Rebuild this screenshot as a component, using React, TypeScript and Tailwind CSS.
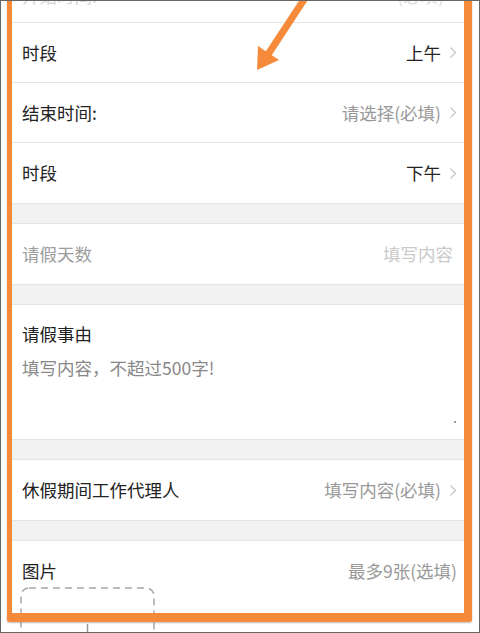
import React from 'react'

const font = { fontFamily: '"Noto Sans CJK SC", "Noto Sans", sans-serif' }

function Chevron() {
  return (
    <svg width="8" height="13" viewBox="0 0 8 13" className="shrink-0">
      <path d="M1.5 1.5 L6.5 6.5 L1.5 11.5" fill="none" stroke="#c9c9c9" strokeWidth="1.4" />
    </svg>
  )
}

function PickRow({ label, value, muted, last }: { label: string; value: string; muted?: boolean; last?: boolean }) {
  return (
    <div className={`h-[60px] flex items-center justify-between pl-3 pr-[7px] ${last ? '' : 'border-b border-[#e4e4e4]'}`}>
      <span className="text-[17.5px] text-[#222]">{label}</span>
      <span className="flex items-center gap-2">
        <span className={`text-[17.5px] ${muted ? 'text-[#999]' : 'text-[#222]'}`}>{value}</span>
        <Chevron />
      </span>
    </div>
  )
}

function Band() {
  return <div className="h-[19px] bg-[#f1f1f1]" />
}

export default function App() {
  return (
    <div className="relative w-[480px] h-[633px] overflow-hidden bg-white border border-[#666]" style={font}>
      <div className="ml-[9px] w-[454px] leading-[24px]">
        {/* Group 1 — time rows */}
        <div className="bg-white border-b border-[#e4e4e4]">
          <div className="h-[22px] overflow-hidden flex justify-between pl-3 pr-[20px] border-b border-[#e4e4e4]">
            <span className="-mt-[17px] text-[17.5px] text-[#d6d6d6]">开始时间:</span>
            <span className="-mt-[17px] text-[17.5px] text-[#dddddd]">(必填)</span>
          </div>
          <PickRow label="时段" value="上午" />
          <PickRow label="结束时间:" value="请选择(必填)" muted />
          <PickRow label="时段" value="下午" last />
        </div>

        <Band />

        {/* Days */}
        <div className="h-[62px] bg-white border-y border-[#e4e4e4] flex items-center justify-between pl-3 pr-[11px]">
          <span className="text-[17.5px] text-[#9d9d9d]">请假天数</span>
          <span className="text-[17.5px] text-[#cacaca]">填写内容</span>
        </div>

        <Band />

        {/* Reason */}
        <div className="relative h-[136px] bg-white border-y border-[#e4e4e4] pl-3 pt-[17px]">
          <div className="text-[17.5px] text-[#222]">请假事由</div>
          <div className="mt-[10px] text-[17.5px] text-[#888]">填写内容，不超过500字!</div>
          <span className="absolute right-[8px] bottom-[16px] w-[2px] h-[2px] rounded-full bg-[#777]" />
        </div>

        <Band />

        {/* Deputy */}
        <div className="h-[62px] bg-white border-y border-[#e4e4e4] flex items-center justify-between pl-3 pr-[7px]">
          <span className="text-[17.5px] text-[#222]">休假期间工作代理人</span>
          <span className="flex items-center gap-2">
            <span className="text-[17.5px] text-[#999]">填写内容(必填)</span>
            <Chevron />
          </span>
        </div>

        <Band />

        {/* Pictures */}
        <div className="bg-white border-t border-[#e4e4e4] pl-3 pr-[7px] pt-[18px]">
          <div className="flex justify-between">
            <span className="text-[17.5px] text-[#222]">图片</span>
            <span className="text-[17.5px] text-[#999]">最多9张(选填)</span>
          </div>
          <svg width="136" height="140" viewBox="0 0 136 140" className="mt-[4px] -ml-[2px]">
            <rect x="1" y="1" width="133" height="136" rx="8" fill="none" stroke="#a9a9a9" strokeWidth="1.5" strokeDasharray="7 5" />
            <path d="M67.5 37 V97 M37.5 67 H97.5" stroke="#999" strokeWidth="1.5" />
          </svg>
        </div>
      </div>

      {/* Orange highlight frame */}
      <div className="absolute left-[6px] right-[7px] -top-[20px] bottom-[10px] border-[#f58a3a] border-l-[5px] border-r-[8px] border-b-[9px] border-t-[5px] rounded-[2px] shadow-[0_1px_2px_rgba(0,0,0,0.25)] pointer-events-none" />

      {/* Arrow */}
      <svg className="absolute left-0 top-0 pointer-events-none" width="480" height="633" viewBox="0 0 480 633">
        <line x1="306" y1="-6" x2="266" y2="55" stroke="#f58a3a" strokeWidth="7" />
        <polygon points="256,69 257,45 278,59" fill="#f58a3a" />
      </svg>
    </div>
  )
}
